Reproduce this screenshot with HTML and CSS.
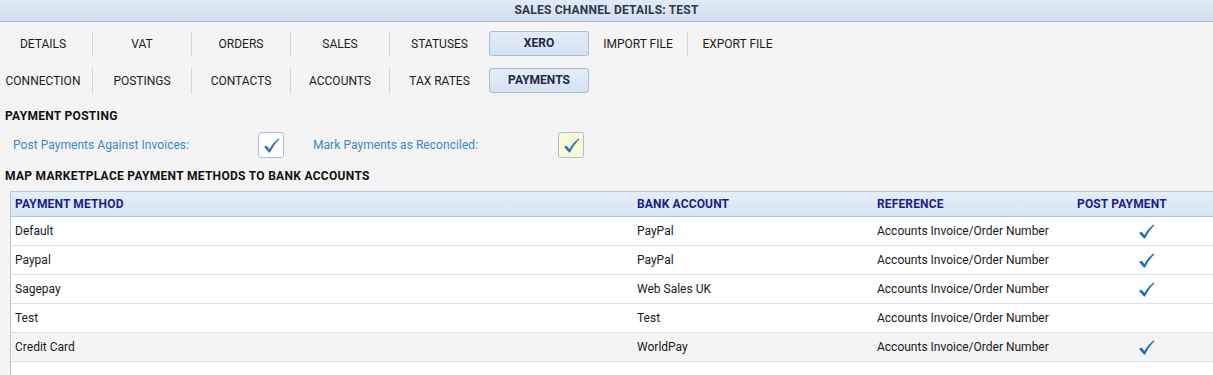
FILE: index.html
```html
<!DOCTYPE html>
<html>
<head>
<meta charset="utf-8">
<link rel="stylesheet" href="styles.css">
</head>
<body>
<div class="titlebar">SALES CHANNEL DETAILS: TEST</div>

<div class="tabs tabs-main">
  <div class="tab sep first">DETAILS</div>
  <div class="tab sep">VAT</div>
  <div class="tab sep">ORDERS</div>
  <div class="tab sep">SALES</div>
  <div class="tab">STATUSES</div>
  <div class="tab active">XERO</div>
  <div class="tab sep">IMPORT FILE</div>
  <div class="tab">EXPORT FILE</div>
</div>

<div class="tabs tabs-sub">
  <div class="tab sep first">CONNECTION</div>
  <div class="tab sep">POSTINGS</div>
  <div class="tab sep">CONTACTS</div>
  <div class="tab sep">ACCOUNTS</div>
  <div class="tab">TAX RATES</div>
  <div class="tab active">PAYMENTS</div>
</div>

<h2 class="section-title first-section">PAYMENT POSTING</h2>
<div class="fields">
  <div class="field">
    <span class="field-label">Post Payments Against Invoices:</span>
    <span class="checkbox">
      <svg viewBox="0 0 16 16" width="17" height="17"><path d="M1 9.4 L3.1 7.9 L6.1 11.2 C8.6 7 11.3 3.8 14.6 1.3 L15.5 2.1 C12.1 5.2 9.3 9.2 6.7 14.6 L5.6 14.6 Z" fill="#2f78b8"/></svg>
    </span>
  </div>
  <div class="field">
    <span class="field-label">Mark Payments as Reconciled:</span>
    <span class="checkbox focused">
      <svg viewBox="0 0 16 16" width="17" height="17"><path d="M1 9.4 L3.1 7.9 L6.1 11.2 C8.6 7 11.3 3.8 14.6 1.3 L15.5 2.1 C12.1 5.2 9.3 9.2 6.7 14.6 L5.6 14.6 Z" fill="#2f78b8"/></svg>
    </span>
  </div>
</div>

<h2 class="section-title second-section">MAP MARKETPLACE PAYMENT METHODS TO BANK ACCOUNTS</h2>

<div class="grid">
  <div class="grid-row grid-head">
    <div class="c1">PAYMENT METHOD</div>
    <div class="c2">BANK ACCOUNT</div>
    <div class="c3">REFERENCE</div>
    <div class="c4">POST PAYMENT</div>
  </div>
  <div class="grid-row">
    <div class="c1">Default</div>
    <div class="c2">PayPal</div>
    <div class="c3">Accounts Invoice/Order Number</div>
    <div class="c4 check"><svg viewBox="0 0 16 16" width="17" height="17"><path d="M1 9.4 L3.1 7.9 L6.1 11.2 C8.6 7 11.3 3.8 14.6 1.3 L15.5 2.1 C12.1 5.2 9.3 9.2 6.7 14.6 L5.6 14.6 Z" fill="#1f6fb5"/></svg></div>
  </div>
  <div class="grid-row">
    <div class="c1">Paypal</div>
    <div class="c2">PayPal</div>
    <div class="c3">Accounts Invoice/Order Number</div>
    <div class="c4 check"><svg viewBox="0 0 16 16" width="17" height="17"><path d="M1 9.4 L3.1 7.9 L6.1 11.2 C8.6 7 11.3 3.8 14.6 1.3 L15.5 2.1 C12.1 5.2 9.3 9.2 6.7 14.6 L5.6 14.6 Z" fill="#1f6fb5"/></svg></div>
  </div>
  <div class="grid-row">
    <div class="c1">Sagepay</div>
    <div class="c2">Web Sales UK</div>
    <div class="c3">Accounts Invoice/Order Number</div>
    <div class="c4 check"><svg viewBox="0 0 16 16" width="17" height="17"><path d="M1 9.4 L3.1 7.9 L6.1 11.2 C8.6 7 11.3 3.8 14.6 1.3 L15.5 2.1 C12.1 5.2 9.3 9.2 6.7 14.6 L5.6 14.6 Z" fill="#1f6fb5"/></svg></div>
  </div>
  <div class="grid-row">
    <div class="c1">Test</div>
    <div class="c2">Test</div>
    <div class="c3">Accounts Invoice/Order Number</div>
    <div class="c4 check"></div>
  </div>
  <div class="grid-row hover">
    <div class="c1">Credit Card</div>
    <div class="c2">WorldPay</div>
    <div class="c3">Accounts Invoice/Order Number</div>
    <div class="c4 check"><svg viewBox="0 0 16 16" width="17" height="17"><path d="M1 9.4 L3.1 7.9 L6.1 11.2 C8.6 7 11.3 3.8 14.6 1.3 L15.5 2.1 C12.1 5.2 9.3 9.2 6.7 14.6 L5.6 14.6 Z" fill="#1f6fb5"/></svg></div>
  </div>
  <div class="grid-fill"></div>
</div>
</body>
</html>
```

FILE: styles.css
```css
html, body {
  margin: 0;
  padding: 0;
  height: 100%;
}
body {
  background: #f4f4f4;
  font-family: Roboto, "Liberation Sans", sans-serif;
  font-size: 12px;
  color: #1a1a1a;
  overflow: hidden;
}
.titlebar {
  height: 21px;
  line-height: 21px;
  text-align: center;
  font-weight: bold;
  letter-spacing: 0.2px;
  color: #2e3849;
  background: linear-gradient(#e1ebf8, #d0deee);
  border-bottom: 1px solid #a8b5cb;
}
.tabs {
  display: flex;
  height: 26px;
}
.tabs-main { margin-top: 9px; }
.tabs-sub { margin-top: 11px; }
.tab {
  box-sizing: border-box;
  width: 99px;
  height: 26px;
  line-height: 26px;
  text-align: center;
  color: #1c1c1c;
}
.tab.first {
  width: 93px;
  padding-right: 6px;
}
.tab.sep {
  border-right: 1px solid #cbd8e8;
}
.tab.active {
  width: 100px;
  height: 25px;
  line-height: 23px;
  font-weight: bold;
  color: #1d2a44;
  border: 1px solid #aabdd6;
  border-radius: 3px;
  background: linear-gradient(#e4eefa, #d4e2f3);
}
.section-title {
  margin: 0;
  padding-left: 5px;
  font-size: 12px;
  line-height: 16px;
  font-weight: bold;
  letter-spacing: 0.3px;
  color: #111;
}
.first-section { margin-top: 14px; }
.second-section { margin-top: 10px; }
.fields {
  display: flex;
  margin-top: 8px;
  padding-left: 13px;
  height: 26px;
  align-items: center;
}
.field {
  display: flex;
  align-items: center;
  margin-right: 29px;
}
.field-label {
  width: 245px;
  color: #3a88c9;
  letter-spacing: 0.05px;
}
.checkbox {
  box-sizing: border-box;
  width: 26px;
  height: 26px;
  border: 1px solid #a9bedb;
  border-radius: 3px;
  background: #fff;
  display: flex;
  align-items: center;
  justify-content: center;
}
.checkbox.focused {
  background: #fafad2;
}
.grid {
  margin-top: 7px;
  margin-left: 10px;
  width: 1210px;
  border-left: 1px solid #b5c5dc;
  background: #fff;
  height: 200px;
}
.grid-row {
  display: flex;
  height: 29px;
  box-sizing: border-box;
  border-bottom: 1px solid #d6e2f0;
  align-items: center;
}
.grid-head {
  height: 26px;
  border-top: 1px solid #b5c5dc;
  border-bottom: 1px solid #b5c5dc;
  background: linear-gradient(#e4eefa, #d6e4f4);
  font-weight: bold;
  letter-spacing: 0.15px;
  color: #1b1d8c;
}
.grid-row.hover {
  background: #f4f4f4;
}
.c1, .c2, .c3, .c4 {
  box-sizing: border-box;
  padding-left: 4px;
}
.c1 { width: 622px; }
.c2 { width: 240px; }
.c3 { width: 200px; }
.c4 { width: 146px; }
.c4.check {
  padding-left: 0;
  display: flex;
  justify-content: center;
  align-items: center;
}
```
